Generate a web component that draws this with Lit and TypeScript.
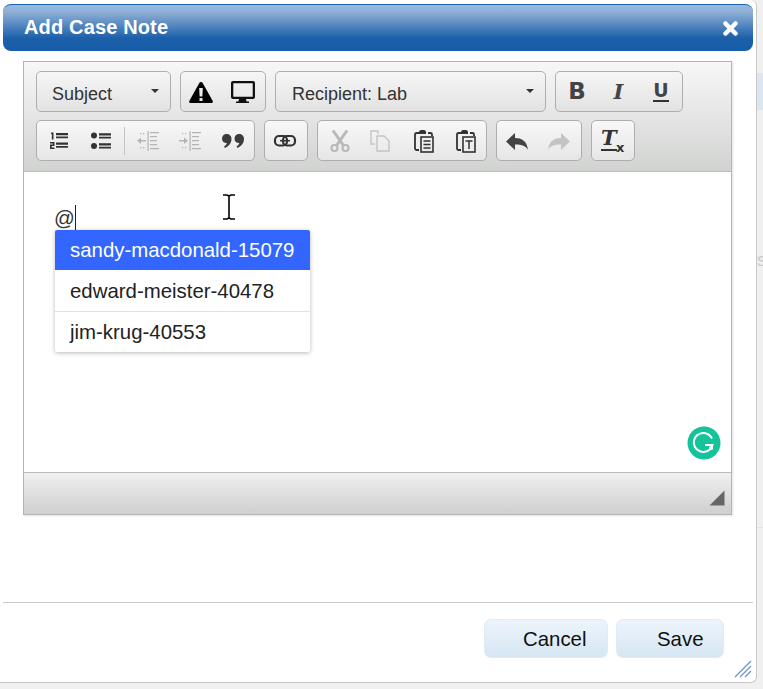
import { LitElement, html, css, svg } from "lit";
import { customElement } from "lit/decorators.js";

const ic = (w: number, h: number, body: unknown, cls = "") =>
  html`<svg class=${cls} width=${w} height=${h} viewBox="0 0 ${w} ${h}">${body}</svg>`;

const warning = ic(26, 24, svg`<path fill-rule="evenodd" fill="#000" d="M13 2c.8 0 1.3.4 1.7 1l10 18c.5 1 0 2-1.2 2H2.5C1.300 23 .8 22 1.300 21l10-18c.4-.6.9-1 1.700-1zM11.200 8l.4 8.500h2.800l.4-8.500zM11.500 18v3h3v-3z"/>`);
const desktop = ic(26, 24, svg`<path fill-rule="evenodd" fill="#111" d="M3 1h20c1.100 0 2 .9 2 2v14c0 1.100-.9 2-2 2h-7l.6 2.500h2.400V23H6v-1.500h2.400L9 19H3c-1.100 0-2-.9-2-2V3c0-1.100.9-2 2-2zm.3 2.300V16.700h19.400V3.300z"/>`);
const ol = ic(20, 20, svg`<g fill="#333"><path d="M7 2h12v2.200H7zM7 5.500h12v1.800H7zM7 11.500h12v2.200H7zM7 15h12v1.800H7z"/><path d="M2 1.500h2.500V8.500H2.800V3H2zM1 11h4.500v4H2.700v1.500h2.800V18H1v-4.500h2.800V12.500H1z"/></g>`, "nudge");
const ul = ic(22, 20, svg`<g fill="#333"><circle cx="4" cy="4.500" r="3"/><circle cx="4" cy="15" r="3"/><path d="M9 2.300h12v2.200H9zM9 5.800h12V7.500H9zM9 12.300h12v2.200H9zM9 15.800h12V17.500H9z"/></g>`, "nudge");
const lines = svg`<path d="M13 2h9v1.300h-9zM13 6h7v1.300h-7zM13 10h7v1.300h-7zM13 14h7v1.300h-7zM13 18h9v1.300h-9zM10.500 1h1.200v20h-1.200z"/>`;
const outdent = ic(24, 22, svg`<g fill="#b4b4b4">${lines}<path d="M9 10H4V7.500L0 10.700 4 14v-2.500h5zM3 3h1.300v1.300H3zM6 3h1.300v1.300H6zM3 17h1.300v1.300H3zM6 17h1.300v1.300H6z"/></g>`);
const indent = ic(24, 22, svg`<g fill="#b4b4b4">${lines}<path d="M0 10h5V7.500L9 10.700 5 14v-2.500H0zM3 3h1.300v1.300H3zM6 3h1.300v1.300H6zM3 17h1.300v1.300H3zM6 17h1.300v1.300H6z"/></g>`);
const quote = ic(24, 20, svg`<g fill="#3c3c3c"><path d="M5.500 3C8.500 3 10.500 5 10.500 8c0 4-3 7.500-6.500 9l-1-1.500c1.500-1 2.500-2 2.800-3.500C3 12 1 10.500 1 7.700 1 5 3 3 5.500 3z"/><path d="M18 3c3 0 5 2 5 5 0 4-3 7.500-6.500 9l-1-1.500c1.500-1 2.500-2 2.800-3.500-2.800 0-4.800-1.500-4.800-4.300C13.500 5 15.500 3 18 3z"/></g>`);
const link = ic(24, 14, svg`<g fill="none" stroke="#333" stroke-width="2.200"><rect x="2" y="2" width="12" height="9.500" rx="4"/><rect x="10" y="2" width="12" height="9.500" rx="4"/></g><path stroke="#333" stroke-width="1.500" d="M7 6.700h10"/>`);
const cut = ic(20, 24, svg`<g fill="none" stroke="#b9b9b9"><path stroke-width="3" d="M3 1.500l10.500 15M17 1.500L6.500 16.500"/><circle stroke-width="2.200" cx="4.500" cy="19" r="3"/><circle stroke-width="2.200" cx="15.500" cy="19" r="3"/></g>`);
const copy = ic(21, 22, svg`<g fill="none" stroke="#c4c4c4" stroke-width="1.400"><path d="M5 14H1V1h7v3M7 6h7l5 5v10H7z"/></g>`);
const clip = svg`<path stroke-width="1.800" d="M6 4H3.500C2.500 4 2 4.500 2 5.500v14c0 1 .5 1.500 1.500 1.500H6M15 4h2.500c1 0 1.500.5 1.500 1.500V7"/><path fill="#333" stroke="none" d="M6 3c0-1 1-2 2-2h3c1 0 2 1 2 2v2H6z"/><rect stroke-width="1.600" x="8" y="8" width="12" height="15"/>`;
const paste = ic(22, 24, svg`<g fill="none" stroke="#333">${clip}<path stroke-width="1.500" d="M10.500 12h7M10.500 15.500h7M10.500 19h7"/></g>`);
const pasteT = ic(22, 24, svg`<g fill="none" stroke="#333">${clip}<path stroke-width="1.500" d="M10.500 12h7M14 12v8"/></g>`);
const arrow = "M9 2v5c7 0 12 3 13 12-2-4-6-5.500-13-5.500V19L0 10.500z";
const undo = ic(22, 20, svg`<path fill="#444" d=${arrow}/>`);
const redo = ic(22, 20, svg`<path fill="#c4c4c4" transform="translate(22 0) scale(-1 1)" d=${arrow}/>`);

@customElement("app-root")
export class AppRoot extends LitElement {
  static styles = css`
    :host { display: block; width: 763px; height: 689px; position: relative; overflow: hidden; background: #f0f0f0; font-family: "Liberation Sans", Arial, sans-serif; }
    .backdrop-blue { position: absolute; left: 757px; top: 73px; width: 6px; height: 37px; background: #dbe6f1; }
    .backdrop-s { position: absolute; left: 757px; top: 250px; font-size: 18px; color: #c9c9c9; }
    .backdrop-line { position: absolute; left: 757px; top: 527px; width: 6px; height: 1px; background: #e3e3e3; }
    .dialog { position: relative; box-sizing: border-box; width: 757px; height: 683px; background: #fff; border-right: 1px solid #c8c8c8; border-bottom: 1px solid #c8c8c8; border-radius: 0 6px 6px 0; padding: 4px 3px 0; display: flex; flex-direction: column; }
    .title { box-sizing: border-box; width: 750px; height: 47px; flex: none; border-radius: 8px; border-top: 1px solid #1a62ae; background: linear-gradient(#9bb9de 0%, #8fb0d7 15%, #1c60aa 72%, #175ca8 100%); display: flex; align-items: center; justify-content: space-between; padding: 0 15px 2px 21px; color: #fff; font-weight: bold; font-size: 20px; letter-spacing: 0.15px; }
    .title svg { display: block; margin-top: 2px; }
    .editor { box-sizing: border-box; width: 709px; height: 454px; margin: 10px 0 0 20px; border: 1px solid #b5b5b5; box-shadow: 1px 1px 2px rgba(0,0,0,.12); display: flex; flex-direction: column; flex: none; }
    .toolbar { box-sizing: border-box; height: 110px; padding: 9px 12px 0; background: linear-gradient(#f7f7f7, #d1d3d1); border-bottom: 1px solid #bcbcbc; display: flex; flex-direction: column; gap: 8px; }
    .row { display: flex; gap: 9px; height: 41px; }
    .group { box-sizing: border-box; height: 41px; border: 1px solid #aeaeae; border-radius: 5px; background: linear-gradient(#f6f6f6, #e2e2e2); display: flex; align-items: center; color: #333; padding-right: 1px; }
    .group.flat { background: linear-gradient(#f8f8f8, #e6e6e6); }
    .group.lists { padding-right: 0; }
    .select { font-size: 18px; justify-content: space-between; padding: 5px 11px 0 15px; }
    .subject { width: 135px; }
    .recipient { width: 271px; padding-left: 16px; }
    .caret { width: 0; height: 0; border-left: 4px solid transparent; border-right: 4px solid transparent; border-top: 4px solid #333; margin-top: -6px; }
    .btn { width: 42px; height: 39px; flex: none; display: flex; align-items: center; justify-content: center; }
    .btn:first-child { margin-left: -1px; }
    .btn.shift { padding-left: 3px; box-sizing: border-box; }
    .nudge { margin-left: 3px; }
    .sep { width: 1px; height: 28px; background: #c4c4c4; margin: 0 3px 0 4px; flex: none; }
    .fmt { font-family: "DejaVu Sans", sans-serif; font-weight: bold; font-size: 23px; color: #444; line-height: 1; margin-left: 2px; }
    .fmt.i { font-family: "DejaVu Serif", serif; font-style: italic; font-size: 21px; margin-left: 1px; }
    .fmt.u { border-bottom: 2px solid #333; line-height: 19px; font-size: 19px; margin-left: 2px; }
    .clear { position: relative; width: 22px; height: 24px; }
    .clear .t { position: absolute; left: 0; top: -2px; font-family: "DejaVu Serif", serif; font-style: italic; font-weight: bold; font-size: 21px; line-height: 22px; color: #333; border-bottom: 2px solid #333; }
    .clear .x { position: absolute; left: 15px; top: 12px; font-family: "DejaVu Sans", sans-serif; font-weight: bold; font-size: 13px; line-height: 13px; color: #333; }
    .area { position: relative; box-sizing: border-box; height: 300px; background: #fff; padding: 33px 30px 0; font-size: 20.5px; line-height: 26px; color: #333; flex: none; }
    .at { display: inline-block; border-right: 1px solid #222; height: 26px; }
    .menu { position: absolute; left: 31px; top: 58px; width: 255px; background: #fff; border-radius: 2px; box-shadow: 0 1px 4px rgba(0,0,0,.28); font-size: 20.4px; color: #222; overflow: hidden; }
    .item { box-sizing: border-box; height: 41px; padding-left: 15px; display: flex; align-items: center; border-top: 1px solid #e2e2e2; }
    .item.first { border-top: 0; }
    .item.active { height: 40px; background: #3366ff; color: #fff; border-top: 0; }
    .beam { position: absolute; left: 198px; top: 22px; }
    .grammarly { position: absolute; left: 663px; top: 254px; }
    .status { position: relative; flex: 1; border-top: 1px solid #bcbcbc; background: linear-gradient(#f0f0f0, #cfcfcf); }
    .status svg { position: absolute; right: 6px; bottom: 8px; }
    .spacer { flex: 1; }
    .footer { box-sizing: border-box; width: 750px; height: 80px; flex: none; border-top: 1px solid #cbcbcb; display: flex; justify-content: flex-end; gap: 8px; padding: 16px 29px 0 0; }
    .action { box-sizing: border-box; height: 39px; padding-top: 2px; border: 1px solid #dfebf5; border-radius: 7px; background: linear-gradient(#ecf4fb, #d6e6f3); font-size: 20.4px; color: #111; display: flex; align-items: center; }
    .cancel { width: 124px; padding-left: 38px; }
    .save { width: 108px; padding-left: 40px; }
    .grip { position: absolute; right: 4px; bottom: 4px; }
  `;

  render() {
    return html`
      <div class="backdrop-blue"></div>
      <div class="backdrop-s">s</div>
      <div class="backdrop-line"></div>
      <div class="dialog">
        <div class="title">
          <span>Add Case Note</span>
          ${ic(15, 15, svg`<path stroke="#fff" stroke-width="4.500" stroke-linecap="round" d="M2.500 2.500l10 10M12.500 2.500l-10 10"/>`)}
        </div>
        <div class="editor">
          <div class="toolbar">
            <div class="row">
              <div class="group select subject"><span>Subject</span><i class="caret"></i></div>
              <div class="group"><div class="btn">${warning}</div><div class="btn">${desktop}</div></div>
              <div class="group select recipient"><span>Recipient: Lab</span><i class="caret"></i></div>
              <div class="group">
                <div class="btn"><span class="fmt">B</span></div>
                <div class="btn"><span class="fmt i">I</span></div>
                <div class="btn"><span class="fmt u">U</span></div>
              </div>
            </div>
            <div class="row">
              <div class="group flat lists">
                <div class="btn">${ol}</div><div class="btn">${ul}</div><i class="sep"></i>
                <div class="btn">${outdent}</div><div class="btn">${indent}</div><div class="btn">${quote}</div>
              </div>
              <div class="group flat"><div class="btn">${link}</div></div>
              <div class="group flat">
                <div class="btn shift">${cut}</div><div class="btn">${copy}</div>
                <div class="btn shift">${paste}</div><div class="btn shift">${pasteT}</div>
              </div>
              <div class="group flat"><div class="btn">${undo}</div><div class="btn">${redo}</div></div>
              <div class="group flat"><div class="btn"><div class="clear"><span class="t">T</span><span class="x">x</span></div></div></div>
            </div>
          </div>
          <div class="area">
            <span class="at">@</span>
            <div class="menu">
              <div class="item active">sandy-macdonald-15079</div>
              <div class="item first">edward-meister-40478</div>
              <div class="item">jim-krug-40553</div>
            </div>
            ${ic(14, 26, svg`<path fill="none" stroke="#000" stroke-width="1.600" d="M1 1h4l2 1 2-1h4M7 2v22M1 25h4l2-1 2 1h4"/>`, "beam")}
            ${ic(34, 34, svg`<circle cx="17" cy="17" r="16.500" fill="#15c39a"/><path fill="none" stroke="#fff" stroke-width="2" d="M25 12.500A9.500 9.500 0 1 0 25.500 19H18"/><path fill="#fff" d="M22 24.500l4-1-.2-4.500-3.800 2z"/>`, "grammarly")}
          </div>
          <div class="status">
            ${ic(16, 16, svg`<path fill="#666" d="M15.500 0.500V15.500H0.500z"/>`)}
          </div>
        </div>
        <div class="spacer"></div>
        <div class="footer">
          <div class="action cancel">Cancel</div>
          <div class="action save">Save</div>
        </div>
        ${ic(18, 18, svg`<path stroke="#6d93c8" stroke-width="1.300" d="M1 17L17 1M6 17L17 6M11 17l6-6"/>`, "grip")}
      </div>
    `;
  }
}
